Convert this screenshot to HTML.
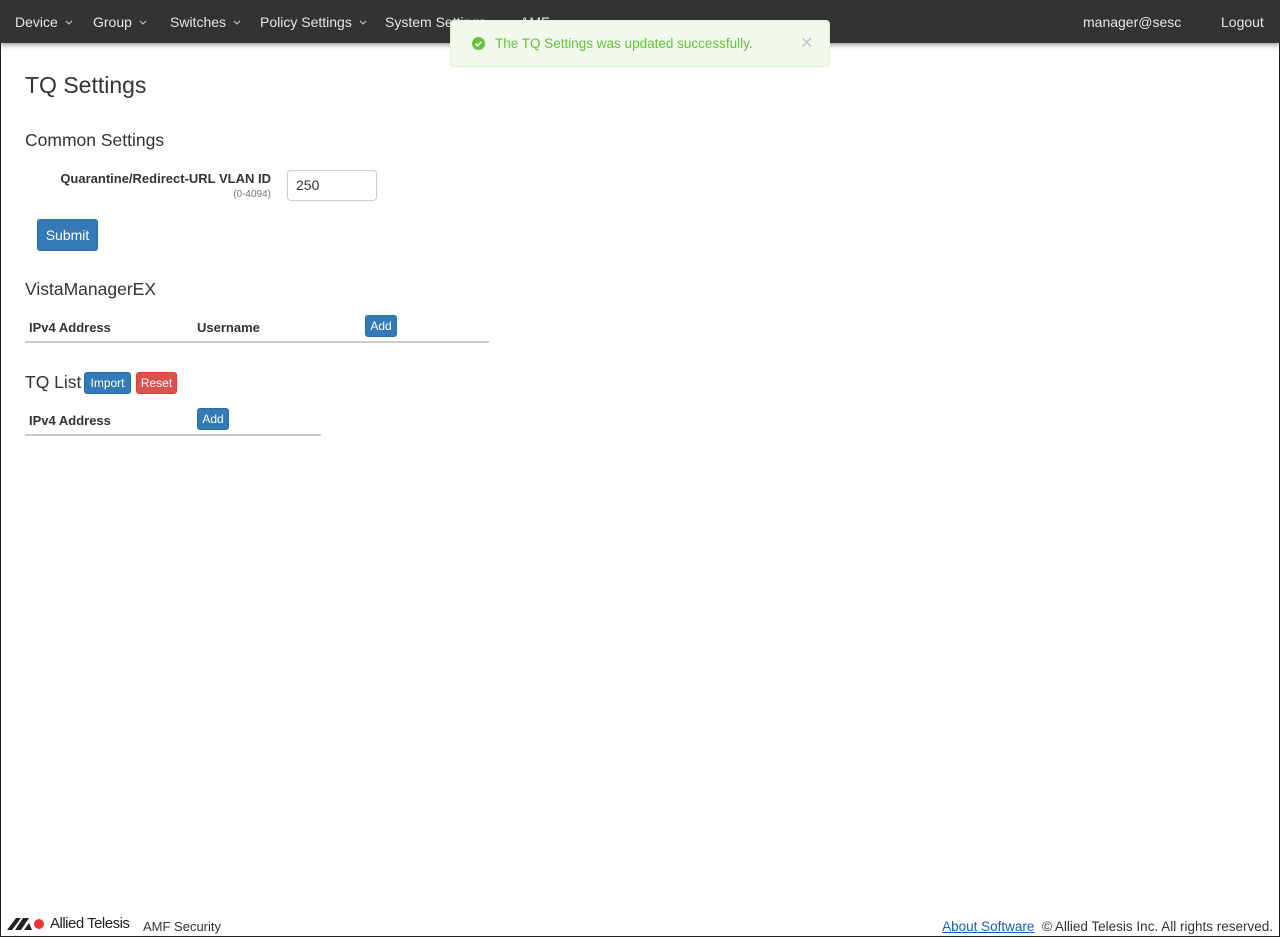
<!DOCTYPE html>
<html><head><style>
html,body{margin:0;padding:0}
body{width:1280px;height:938px;position:relative;overflow:hidden;font-family:"Liberation Sans",sans-serif;color:#333;background:#fff;}
.frame{position:absolute;left:0;top:0;width:1278px;height:936px;border:1px solid #222;border-top:none;}
.nav{position:absolute;left:0;top:0;width:1280px;height:43px;background:#333;box-shadow:0 2px 5px rgba(0,0,0,.4);}
.nav span{position:absolute;top:14px;color:#e6e6e6;font-size:14px;white-space:nowrap}
.car{margin-left:7px;vertical-align:2px}
.toast{position:absolute;left:450px;top:20px;width:378px;height:45px;background:#f0f9eb;border:1px solid #e1f3d8;border-radius:4px;color:#67c23a;font-size:14px;}
.toast .ic{position:absolute;left:21px;top:16px;width:13px;height:13px;border-radius:50%;background:#67c23a;}
.toast .t{position:absolute;left:44px;top:15px;font-size:13.5px}
.toast .x{position:absolute;left:349px;top:12px;color:#c0c4cc;font-size:16px}
h1{position:absolute;left:25px;top:72px;margin:0;font-weight:normal;font-size:23px;color:#333}
.h3{position:absolute;left:25px;margin:0;font-size:17.5px;color:#333}
.b{position:absolute;font-weight:bold;font-size:13px;color:#333}
.btn{position:absolute;background:#337ab7;color:#fff;border:1px solid #2e6da4;border-radius:3px;font-size:12px;text-align:center;box-sizing:border-box;}
.line{position:absolute;height:2px;background:#ccc;left:25px}
</style></head><body>
<div class="frame"></div>
<div class="nav">
<span style="left:15px">Device<svg class="car" width="8" height="5"><path d="M1 1l3 3 3-3" stroke="#ccc" fill="none"/></svg></span>
<span style="left:93px">Group<svg class="car" width="8" height="5"><path d="M1 1l3 3 3-3" stroke="#ccc" fill="none"/></svg></span>
<span style="left:170px">Switches<svg class="car" width="8" height="5"><path d="M1 1l3 3 3-3" stroke="#ccc" fill="none"/></svg></span>
<span style="left:260px">Policy Settings<svg class="car" width="8" height="5"><path d="M1 1l3 3 3-3" stroke="#ccc" fill="none"/></svg></span>
<span style="left:385px">System Settings</span>
<span style="left:520px">AMF</span>
<span style="left:1083px">manager@sesc</span>
<span style="left:1221px">Logout</span>
</div>
<div class="toast"><div class="ic"><svg width="13" height="13"><path d="M3.5 6.8l2 2 4-4" stroke="#fff" stroke-width="1.6" fill="none"/></svg></div><span class="t">The TQ Settings was updated successfully.</span><span class="x">✕</span></div>
<h1>TQ Settings</h1>
<div class="h3" style="top:130px">Common Settings</div>
<div class="b" style="right:1009px;top:171px;text-align:right">Quarantine/Redirect-URL VLAN ID</div>
<div style="position:absolute;right:1009px;top:189px;font-size:10px;color:#777">(0-4094)</div>
<div style="position:absolute;left:287px;top:170px;height:29px;border:1px solid #ccc;border-radius:4px;font-size:14px;line-height:29px;padding-left:8px;width:80px">250</div>
<div class="btn" style="left:37px;top:219px;width:61px;height:32px;line-height:30px;font-size:14px">Submit</div>
<div class="h3" style="top:279px">VistaManagerEX</div>
<div class="b" style="left:29px;top:320px">IPv4 Address</div>
<div class="b" style="left:197px;top:320px">Username</div>
<div class="btn" style="left:365px;top:315px;width:32px;height:22px;line-height:20px">Add</div>
<div class="line" style="top:341px;width:464px"></div>
<div class="h3" style="top:372px">TQ List</div>
<div class="btn" style="left:84px;top:372px;width:47px;height:22px;line-height:20px">Import</div>
<div class="btn" style="left:136px;top:372px;width:41px;height:22px;line-height:20px;background:#d9534f;border-color:#d43f3a">Reset</div>
<div class="b" style="left:29px;top:413px">IPv4 Address</div>
<div class="btn" style="left:197px;top:408px;width:32px;height:22px;line-height:20px">Add</div>
<div class="line" style="top:434px;width:296px"></div>
<svg style="position:absolute;left:7px;top:917px" width="40" height="14"><path d="M0 13L9 1h5L5 13z M8 13L16 1h6L14 13z M17 13l5-7 3 7z" fill="#222"/><circle cx="32" cy="7" r="5" fill="#e33"/></svg>
<div style="position:absolute;left:50px;top:915px;font-size:15px;color:#222;letter-spacing:-0.5px">Allied Telesis</div>
<div style="position:absolute;left:143px;top:919px;font-size:13px;color:#333">AMF Security</div>
<div style="position:absolute;right:7px;top:919px;font-size:13.5px;color:#333;white-space:nowrap"><span style="color:#1a5fb4;text-decoration:underline">About Software</span>&nbsp; © Allied Telesis Inc. All rights reserved.</div>
</body></html>
